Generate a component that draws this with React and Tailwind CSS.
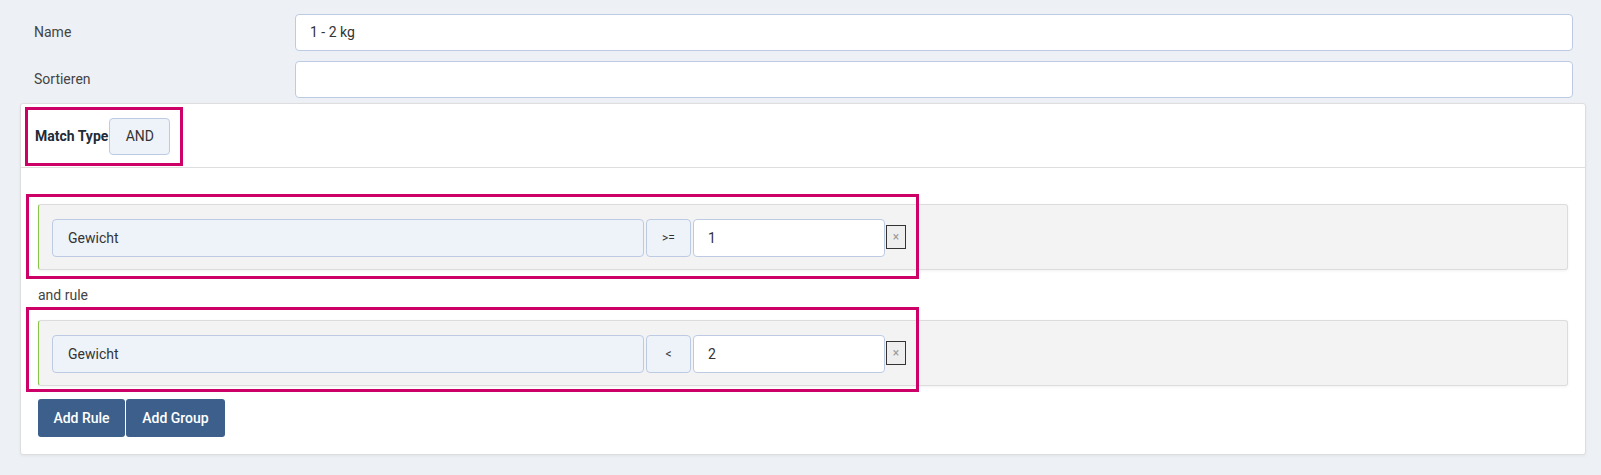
import React from "react";

const font = { fontFamily: "Roboto, 'Liberation Sans', sans-serif" };

const FormRow = ({ label, value }) => (
  <div className="flex items-center">
    <label className="w-[261px] shrink-0 text-[14px] text-[#444]">{label}</label>
    <div className="flex-1 h-[37px] bg-white border border-[#bccbe3] rounded-[4px] flex items-center px-[14px] text-[14px] text-[#333]">
      {value}
    </div>
  </div>
);

const Rule = ({ op, value, highlight }) => (
  <div className="relative">
    <div className="flex items-start h-[66px] pl-[13px] pt-[14px] bg-[#f3f3f3] border border-[#dcdcdc] border-l-[#8bc34a] rounded-[3px] shadow-[0_1px_3px_rgba(0,0,0,0.06)]">
      <div className="w-[592px] h-[38px] flex items-center px-[15px] bg-[#eef3fa] border border-[#bccbe3] rounded-[4px] text-[14px] text-[#333]">
        Gewicht
      </div>
      <div className="ml-[2px] w-[45px] h-[38px] flex items-center justify-center bg-[#eef3fa] border border-[#bccbe3] rounded-[4px] text-[12px] text-[#333]">
        {op}
      </div>
      <div className="ml-[2px] w-[192px] h-[38px] flex items-center px-[14px] bg-white border border-[#bccbe3] rounded-[4px] text-[14px] text-[#333]">
        {value}
      </div>
      <div className="ml-[1px] mt-[6px] w-[20px] h-[24px] flex items-center justify-center bg-[#eeeeee] border border-[#333] text-[12px] text-[#999]">
        ×
      </div>
    </div>
    {/* highlight annotation */}
    <div
      className={`absolute border-[3px] border-[#cc0066] pointer-events-none ${highlight}`}
    />
  </div>
);

export default function App() {
  return (
    <div className="min-h-[475px] bg-[#edf1f6] pt-[14px] pb-[19px]" style={font}>
      <div className="pl-[34px] pr-[28px] flex flex-col gap-[10px]">
        <FormRow label="Name" value="1 - 2 kg" />
        <FormRow label="Sortieren" value="" />
      </div>

      <div className="mt-[5px] ml-[20px] mr-[15px] bg-white border border-[#dedede] rounded-[3px] shadow-[0_1px_3px_rgba(0,0,0,0.06)]">
        <div className="h-[64px] border-b border-[#dedede] pl-[4px] pt-[3px]">
          <div className="inline-flex items-center w-[158px] h-[59px] border-[3px] border-[#cc0066] pl-[7px]">
            <span className="text-[14px] font-bold text-[#222b38]">Match Type</span>
            <button className="ml-[1px] w-[61px] h-[37px] bg-[#eef3fa] border border-[#bccbe3] rounded-[4px] text-[14px] text-[#333]">
              AND
            </button>
          </div>
        </div>

        <div className="pt-[36px] pl-[17px] pr-[17px] pb-[17px]">
          <Rule op=">=" value="1" highlight="-top-[10px] -bottom-[9px] -left-[12px] w-[893px]" />
          <div className="h-[50px] flex items-center text-[14px] text-[#444]">and rule</div>
          <Rule op="<" value="2" highlight="-top-[13px] -bottom-[6px] -left-[12px] w-[893px]" />
          <div className="mt-[13px] flex">
            <button className="w-[87px] h-[38px] bg-[#3d5f8b] text-white text-[14px] font-medium rounded-[3px]">
              Add Rule
            </button>
            <button className="ml-[1px] w-[99px] h-[38px] bg-[#3d5f8b] text-white text-[14px] font-medium rounded-[3px]">
              Add Group
            </button>
          </div>
        </div>
      </div>
    </div>
  );
}
